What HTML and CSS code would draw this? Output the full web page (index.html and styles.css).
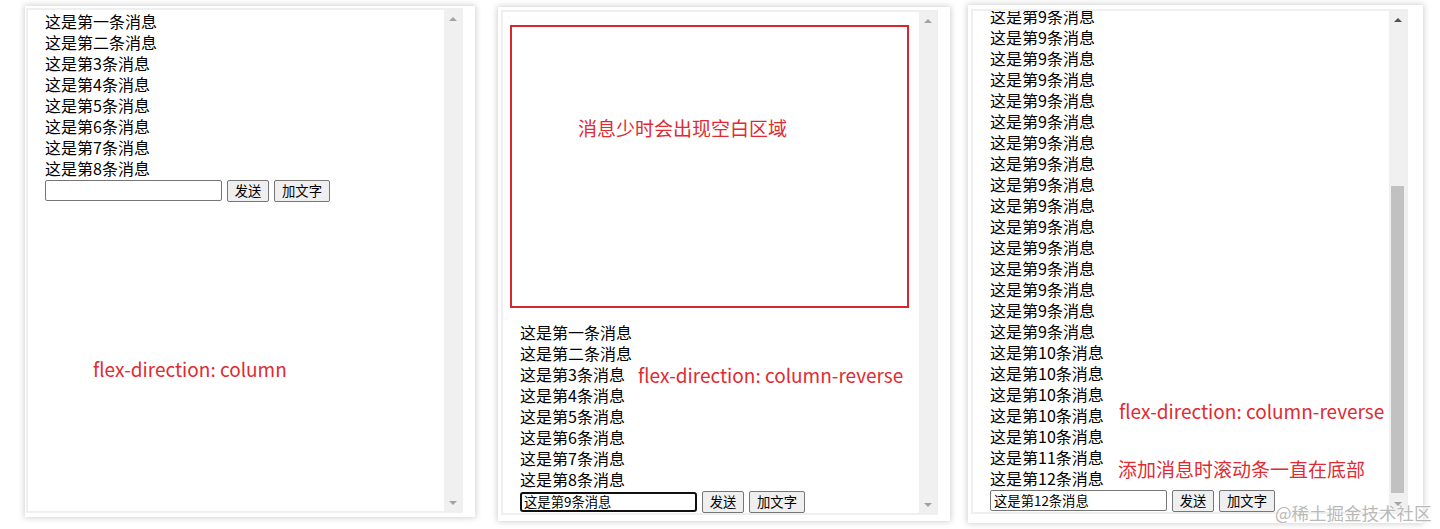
FILE: index.html
```html
<!DOCTYPE html>
<html lang="zh-CN">
<head>
<meta charset="utf-8">
<title>flex-direction demo</title>
<link rel="stylesheet" href="styles.css">
</head>
<body>
<div class="stage">
  <div class="card card1">
    <div class="frame">
      <div class="content content1">
        <div class="msg">这是第一条消息</div>
        <div class="msg">这是第二条消息</div>
        <div class="msg">这是第3条消息</div>
        <div class="msg">这是第4条消息</div>
        <div class="msg">这是第5条消息</div>
        <div class="msg">这是第6条消息</div>
        <div class="msg">这是第7条消息</div>
        <div class="msg">这是第8条消息</div>
        <div class="row"><input class="field" value=""><button class="btn btn-send">发送</button><button class="btn btn-add">加文字</button></div>
      </div>
      <div class="scrollbar">
        <div class="arrow"><span class="tri tri-up"></span></div>
        <div class="track"></div>
        <div class="arrow"><span class="tri tri-down"></span></div>
      </div>
    </div>
    <div class="note note1">flex-direction: column</div>
  </div>

  <div class="card card2">
    <div class="frame">
      <div class="content content-end">
        <div class="empty-box"><span class="empty-text">消息少时会出现空白区域</span></div>
        <div class="msg">这是第一条消息</div>
        <div class="msg">这是第二条消息</div>
        <div class="msg">这是第3条消息</div>
        <div class="msg">这是第4条消息</div>
        <div class="msg">这是第5条消息</div>
        <div class="msg">这是第6条消息</div>
        <div class="msg">这是第7条消息</div>
        <div class="msg">这是第8条消息</div>
        <div class="row"><input class="field field-focus" value="这是第9条消息"><button class="btn btn-send">发送</button><button class="btn btn-add">加文字</button></div>
      </div>
      <div class="scrollbar">
        <div class="arrow"><span class="tri tri-up"></span></div>
        <div class="track"></div>
        <div class="arrow"><span class="tri tri-down"></span></div>
      </div>
    </div>
    <div class="note note2">flex-direction: column-reverse</div>
  </div>

  <div class="card card3">
    <div class="frame">
      <div class="content content-end">
        <div class="msg">这是第9条消息</div>
        <div class="msg">这是第9条消息</div>
        <div class="msg">这是第9条消息</div>
        <div class="msg">这是第9条消息</div>
        <div class="msg">这是第9条消息</div>
        <div class="msg">这是第9条消息</div>
        <div class="msg">这是第9条消息</div>
        <div class="msg">这是第9条消息</div>
        <div class="msg">这是第9条消息</div>
        <div class="msg">这是第9条消息</div>
        <div class="msg">这是第9条消息</div>
        <div class="msg">这是第9条消息</div>
        <div class="msg">这是第9条消息</div>
        <div class="msg">这是第9条消息</div>
        <div class="msg">这是第9条消息</div>
        <div class="msg">这是第9条消息</div>
        <div class="msg">这是第9条消息</div>
        <div class="msg">这是第9条消息</div>
        <div class="msg">这是第9条消息</div>
        <div class="msg">这是第9条消息</div>
        <div class="msg">这是第10条消息</div>
        <div class="msg">这是第10条消息</div>
        <div class="msg">这是第10条消息</div>
        <div class="msg">这是第10条消息</div>
        <div class="msg">这是第10条消息</div>
        <div class="msg">这是第11条消息</div>
        <div class="msg">这是第12条消息</div>
        <div class="row"><input class="field" value="这是第12条消息"><button class="btn btn-send">发送</button><button class="btn btn-add">加文字</button></div>
      </div>
      <div class="scrollbar">
        <div class="arrow"><span class="tri tri-up tri-dark"></span></div>
        <div class="track track-thumb"><div class="thumb"></div></div>
        <div class="arrow"><span class="tri tri-down"></span></div>
      </div>
    </div>
    <div class="note note3">flex-direction: column-reverse</div>
    <div class="note note4">添加消息时滚动条一直在底部</div>
  </div>

  <div class="watermark">@稀土掘金技术社区</div>
</div>
</body>
</html>
```
FILE: styles.css
```css
html, body {
  margin: 0;
  padding: 0;
  background: #ffffff;
}

body {
  font-family: "Noto Sans CJK SC", "Noto Sans", sans-serif;
  color: #000;
}

.stage {
  position: relative;
  display: flex;
  align-items: flex-start;
  padding-left: 25px;
  height: 529px;
  overflow: hidden;
}

.card {
  position: relative;
  box-sizing: border-box;
  display: flex;
  background: #fff;
  box-shadow: 0 0 6px 1px rgba(0, 0, 0, 0.18);
}

.card1 {
  width: 450px;
  height: 511px;
  margin-top: 6px;
  padding: 2px 12px 4px 1px;
}

.card2 {
  width: 452px;
  height: 514px;
  margin-top: 7px;
  margin-left: 23px;
  padding: 3px 12px 6px 3px;
}

.card3 {
  width: 455px;
  height: 518px;
  margin-top: 5px;
  margin-left: 18px;
  padding: 4px 15px 9px 3px;
}

.frame {
  flex: 1;
  display: flex;
  border: 2px solid #efefef;
  min-height: 0;
}

.content {
  position: relative;
  flex: 1;
  display: flex;
  flex-direction: column;
  background: #fff;
  overflow: hidden;
  padding-left: 17px;
  min-width: 0;
}

.content1 {
  padding-top: 1px;
}

.content-end {
  justify-content: flex-end;
}

.msg {
  flex: none;
  font-size: 16px;
  line-height: 21px;
  height: 21px;
  white-space: nowrap;
}

.row {
  flex: none;
  display: flex;
  align-items: center;
  height: 23px;
}

.field {
  box-sizing: border-box;
  width: 177px;
  height: 21px;
  margin: 0;
  padding: 0 3px;
  border: 1px solid #767676;
  border-radius: 2px;
  font-family: "Noto Sans CJK SC", sans-serif;
  font-size: 13.33px;
  color: #000;
  background: #fff;
  outline: none;
}

.field-focus {
  border: 2px solid #101010;
  border-radius: 3px;
  padding: 0 2px;
  height: 20px;
}

.btn {
  box-sizing: border-box;
  height: 22px;
  margin: 0 0 0 5px;
  padding: 0;
  border: 1px solid #767676;
  border-radius: 2px;
  background: #efefef;
  font-family: "Noto Sans CJK SC", sans-serif;
  font-size: 13.33px;
  line-height: 20px;
  color: #000;
}

.btn-send {
  width: 42px;
}

.btn-add {
  width: 56px;
}

.scrollbar {
  flex: none;
  width: 17px;
  display: flex;
  flex-direction: column;
  background: #f0f0f0;
}

.arrow {
  flex: none;
  height: 17px;
  display: flex;
  align-items: center;
  justify-content: center;
}

.tri {
  width: 0;
  height: 0;
  border-left: 4px solid transparent;
  border-right: 4px solid transparent;
}

.tri-up {
  border-bottom: 4px solid #a3a3a3;
}

.tri-down {
  border-top: 4px solid #a3a3a3;
}

.tri-up.tri-dark {
  border-bottom-color: #505050;
}

.track {
  flex: 1;
  display: flex;
  flex-direction: column;
}

.track-thumb {
  padding: 158px 2px 2px 2px;
}

.thumb {
  flex: 1;
  background: #c1c1c1;
}

.empty-box {
  position: absolute;
  left: 7px;
  top: 13px;
  width: 399px;
  height: 283px;
  box-sizing: border-box;
  border: 2px solid #d8262f;
}

.empty-text {
  position: absolute;
  left: 66px;
  top: 88px;
  font-size: 19px;
  line-height: 26px;
  color: #e02b32;
  white-space: nowrap;
}

.note {
  position: absolute;
  font-size: 19px;
  line-height: 26px;
  color: #e02b32;
  white-space: nowrap;
}

.note1 {
  left: 68px;
  top: 350px;
}

.note2 {
  left: 140px;
  top: 355px;
}

.note3 {
  left: 151px;
  top: 393px;
}

.note4 {
  left: 150px;
  top: 451px;
}

.watermark {
  position: absolute;
  left: 1275px;
  top: 501px;
  font-size: 17.5px;
  line-height: 24px;
  color: #b9b9b9;
  text-shadow: 0 0 2px #fff, 0 0 2px #fff;
  white-space: nowrap;
  z-index: 2;
}
```
